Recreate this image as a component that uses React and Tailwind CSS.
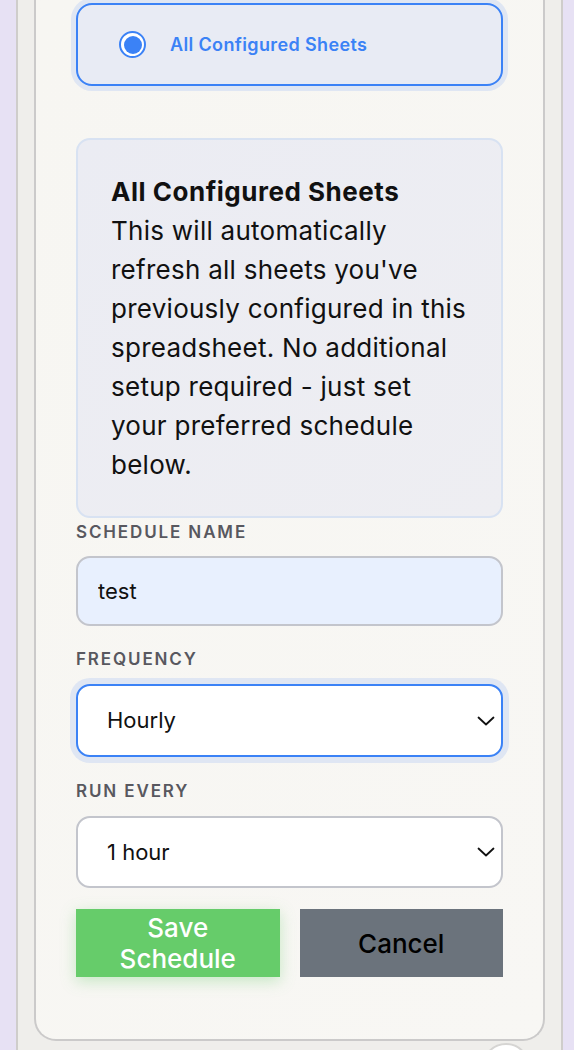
import React, { useState } from 'react';

const Chevron = () => (
  <svg
    className="pointer-events-none absolute right-[8px] top-1/2 -translate-y-1/2"
    width="18"
    height="10"
    viewBox="0 0 18 10"
    fill="none"
  >
    <path d="M1.5 1.5 L9 8.5 L16.5 1.5" stroke="#111" strokeWidth="1.8" strokeLinecap="round" strokeLinejoin="round" />
  </svg>
);

const Label = ({ children }) => (
  <div className="text-[17px] font-semibold uppercase leading-[20px] tracking-[0.11em] text-[#58585f]">
    {children}
  </div>
);

export default function App() {
  const [name, setName] = useState('test');
  const [frequency, setFrequency] = useState('hourly');
  const [every, setEvery] = useState('1');

  return (
    <div
      className="h-[1050px] overflow-hidden bg-[#e7e1f4] pl-4 pr-[11px] text-[#111]"
      style={{ fontFamily: 'Inter, "Noto Sans", sans-serif' }}
    >
      <div className="flex h-full flex-col border-x-2 border-[#cfcdcb] bg-[#efeeeb] px-[16px]">
        {/* Settings card */}
        <div className="rounded-b-[22px] border-x-2 border-b-2 border-[#cbcaca] bg-gradient-to-br from-[#f7f6f2] to-[#f8f7f4] px-10 pb-[62px] pt-[3px]">
          {/* Selected option */}
          <label className="flex h-[83px] items-center gap-[24px] rounded-[16px] border-2 border-[#3b82f6] bg-[#e8ebf4] pl-[41px] shadow-[0_0_0_5px_#dfe6f3]">
            <span className="flex h-[27px] w-[27px] items-center justify-center rounded-full border-[2.5px] border-[#3b82f6] bg-white">
              <span className="h-[18px] w-[18px] rounded-full bg-[#3b82f6]" />
            </span>
            <span className="text-[18px] font-semibold tracking-[0.02em] text-[#3b82f6]">All Configured Sheets</span>
          </label>

          {/* Description */}
          <div className="mt-[52px] rounded-[14px] border-2 border-[#d8e2f2] bg-gradient-to-br from-[#ebecf3] to-[#eeeef2] px-[33px] py-[32px] text-[26px] leading-[39px] tracking-[0.01em]">
            <div className="font-bold tracking-[0.02em]">All Configured Sheets</div>
            <div>
              This will automatically refresh all sheets you've previously configured in this spreadsheet. No additional
              setup required - just set your preferred schedule below.
            </div>
          </div>

          {/* Schedule name */}
          <div className="mt-[4px]">
            <Label>Schedule Name</Label>
            <input
              value={name}
              onChange={(e) => setName(e.target.value)}
              className="mt-[14px] h-[70px] w-full rounded-[14px] border-2 border-[#c3c5cc] bg-[#e8f0fe] px-[20px] text-[22px] text-[#111] outline-none"
            />
          </div>

          {/* Frequency */}
          <div className="mt-[23px]">
            <Label>Frequency</Label>
            <div className="relative mt-[15px]">
              <select
                value={frequency}
                onChange={(e) => setFrequency(e.target.value)}
                className="h-[73px] w-full appearance-none rounded-[14px] border-2 border-[#3b82f6] bg-white px-[29px] text-[22px] text-[#111] shadow-[0_0_0_6px_#dfe6f3] outline-none"
              >
                <option value="hourly">Hourly</option>
                <option value="daily">Daily</option>
                <option value="weekly">Weekly</option>
              </select>
              <Chevron />
            </div>
          </div>

          {/* Run every */}
          <div className="mt-[24px]">
            <Label>Run Every</Label>
            <div className="relative mt-[15px]">
              <select
                value={every}
                onChange={(e) => setEvery(e.target.value)}
                className="h-[72px] w-full appearance-none rounded-[14px] border-2 border-[#c3c5cc] bg-white px-[29px] text-[22px] text-[#111] outline-none"
              >
                <option value="1">1 hour</option>
                <option value="2">2 hours</option>
                <option value="4">4 hours</option>
              </select>
              <Chevron />
            </div>
          </div>

          {/* Actions */}
          <div className="mt-[21px] grid grid-cols-2 gap-[20px]">
            <button className="flex h-[68px] items-center justify-center bg-[#66cc6a] px-4 text-[26px] font-medium leading-[31px] text-white shadow-[0_4px_14px_rgba(102,204,106,0.35)]">
              Save
              <br />
              Schedule
            </button>
            <button className="flex h-[68px] items-center justify-center bg-[#6b737c] text-[26px] font-medium text-black">
              Cancel
            </button>
          </div>
        </div>

        <div className="flex justify-end pr-[15px]">
          <div className="mt-[2px] h-[48px] w-[48px] rounded-full border-2 border-[#d6d5d3] bg-white" />
        </div>
      </div>
    </div>
  );
}
